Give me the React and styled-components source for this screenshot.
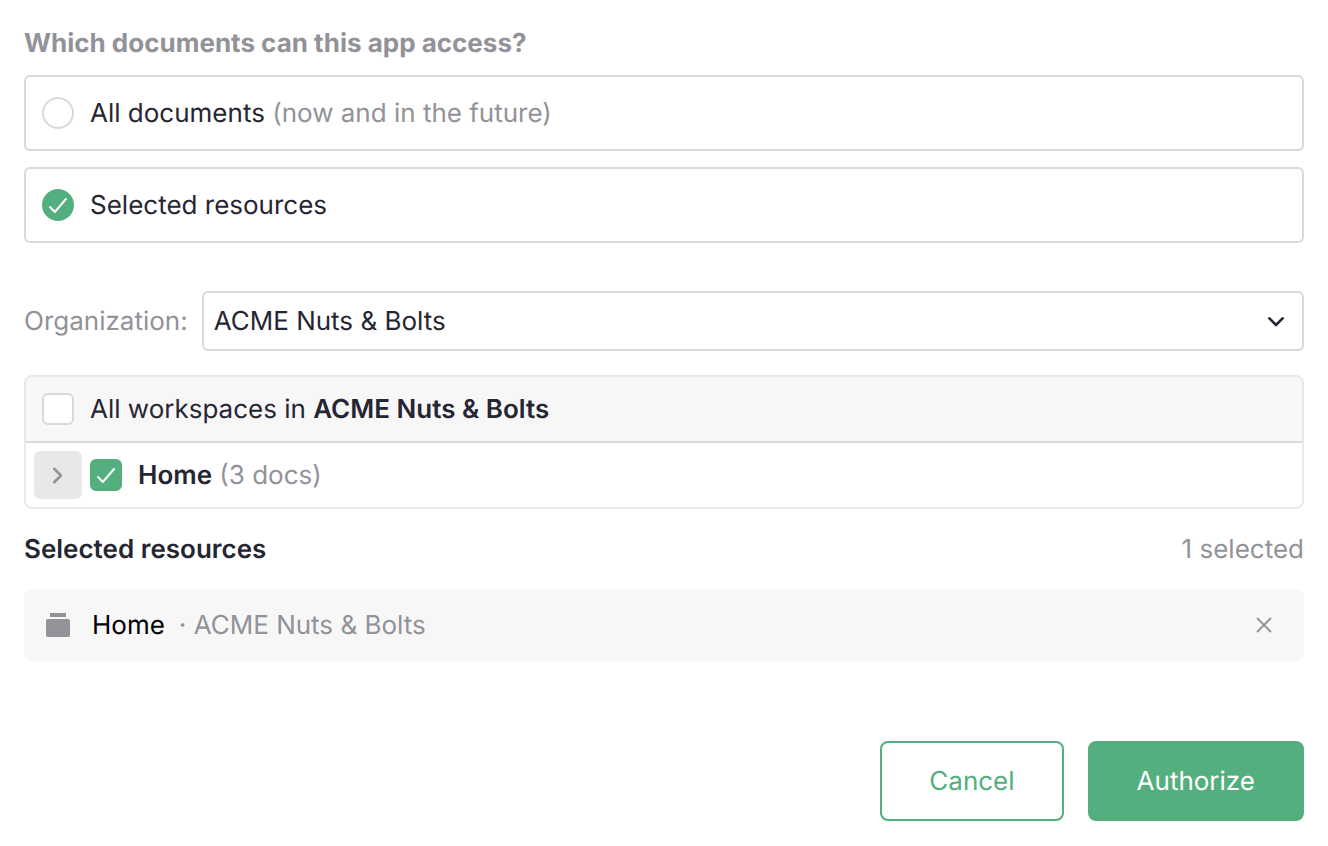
import React, { useState } from "react";
import styled, { createGlobalStyle } from "styled-components";

const color = {
  text: "#262633",
  muted: "#929299",
  border: "#d9d9d9",
  lightBorder: "#e8e8e8",
  surface: "#f7f7f7",
  green: "#53af7e",
};

const GlobalStyle = createGlobalStyle`
  *, *::before, *::after { box-sizing: border-box; }
  body {
    margin: 0;
    background: #fff;
    color: ${color.text};
    font-family: Inter, "Liberation Sans", sans-serif;
    font-size: 26px;
    line-height: 40px;
    text-rendering: geometricPrecision;
  }
  button, select { font: inherit; text-rendering: inherit; }
`;

const Form = styled.form`
  display: flex;
  flex-direction: column;
  padding: 24px;
`;

const OptionGroup = styled.fieldset`
  display: flex;
  flex-direction: column;
  gap: 16px;
  min-width: 0;
  margin: 0 0 48px;
  padding: 0;
  border: 0;
`;

const GroupTitle = styled.legend`
  margin-bottom: 11px;
  padding: 0;
  color: ${color.muted};
  font-weight: 700;
`;

const Option = styled.label`
  display: flex;
  align-items: center;
  gap: 16px;
  min-height: 76px;
  padding: 0 16px;
  border: 2px solid ${color.border};
  border-radius: 6px;
`;

const Caption = styled.span`
  padding-top: 2px;
`;

const Muted = styled.span`
  color: ${color.muted};
`;

const Strong = styled.strong`
  font-weight: 600;
`;

const Mark = styled.span`
  display: grid;
  flex: none;
  width: 32px;
  height: 32px;

  > * { grid-area: 1 / 1; }
  > svg { pointer-events: none; }
`;

const MarkInput = styled.input`
  appearance: none;
  width: 32px;
  height: 32px;
  margin: 0;
  background: #fff;
  border: 2px solid ${color.border};
  border-radius: ${(p) => (p.type === "radio" ? "50%" : "6px")};

  &:checked {
    background: ${color.green};
    border-color: ${color.green};
  }
`;

const OrgRow = styled.div`
  display: flex;
  align-items: center;
  gap: 14px;
  margin-bottom: 24px;
`;

const OrgLabel = styled.label`
  padding-top: 2px;
  color: ${color.muted};
`;

const SelectBox = styled.div`
  display: grid;
  flex: 1;
  align-items: center;

  > * { grid-area: 1 / 1; }
  > svg {
    justify-self: end;
    margin-right: 16px;
    pointer-events: none;
  }
`;

const Select = styled.select`
  appearance: none;
  width: 100%;
  height: 60px;
  padding: 2px 48px 0 10px;
  color: ${color.text};
  background: #fff;
  border: 2px solid ${color.border};
  border-radius: 6px;
`;

const Tree = styled.div`
  border: 2px solid ${color.lightBorder};
  border-radius: 8px;
  overflow: hidden;
`;

const TreeHeader = styled.label`
  display: flex;
  align-items: center;
  gap: 16px;
  height: 66px;
  padding: 0 16px;
  background: ${color.surface};
  border-bottom: 2px solid ${color.border};
`;

const TreeRow = styled.div`
  display: flex;
  align-items: center;
  gap: 8px;
  height: 64px;
  padding: 0 8px;
`;

const TreeLabel = styled.label`
  display: flex;
  align-items: center;
  gap: 16px;
`;

const Expander = styled.button`
  display: grid;
  place-items: center;
  width: 48px;
  height: 48px;
  padding: 0;
  color: ${color.muted};
  background: ${color.lightBorder};
  border: 0;
  border-radius: 6px;
`;

const Summary = styled.div`
  display: flex;
  align-items: center;
  justify-content: space-between;
  height: 80px;
  padding-top: 2px;
`;

const SummaryTitle = styled.h2`
  margin: 0;
  font-size: inherit;
  font-weight: 600;
`;

const Resource = styled.div`
  display: flex;
  align-items: center;
  height: 72px;
  padding: 0 24px 0 20px;
  color: ${color.muted};
  background: ${color.surface};
  border-radius: 8px;
`;

const ResourceName = styled(Caption)`
  margin: 0 14px 0 20px;
  color: #000;
`;

const RemoveButton = styled.button`
  display: grid;
  place-items: center;
  width: 32px;
  height: 32px;
  margin-left: auto;
  padding: 0;
  color: inherit;
  background: none;
  border: 0;
`;

const Actions = styled.div`
  display: flex;
  justify-content: flex-end;
  gap: 24px;
  margin-top: 80px;
`;

const Button = styled.button`
  height: 80px;
  padding: 2px 47px 0;
  color: ${(p) => (p.$primary ? "#fff" : color.green)};
  background: ${(p) => (p.$primary ? color.green : "#fff")};
  border: 2px solid ${color.green};
  border-radius: 8px;
`;

const Stroke = ({ size, width = 2, d }) => (
  <svg
    width={size}
    height={size}
    viewBox={`0 0 ${size} ${size}`}
    fill="none"
    stroke="currentColor"
    strokeWidth={width}
    strokeLinecap="round"
    strokeLinejoin="round"
    aria-hidden="true"
  >
    <path d={d} />
  </svg>
);

const CheckMark = () => (
  <svg width="32" height="32" viewBox="0 0 32 32" fill="none" stroke="#fff" strokeWidth="2" strokeLinecap="round" strokeLinejoin="round" aria-hidden="true">
    <path d="M8 18L12.8 23L24 10" />
  </svg>
);

const WorkspaceIcon = () => (
  <svg width="28" height="32" viewBox="0 0 28 32" fill="currentColor" aria-hidden="true">
    <rect x="6" y="4" width="16" height="4" />
    <rect x="2" y="10" width="24" height="18" rx="2" />
  </svg>
);

function Toggle({ type, ...rest }) {
  return (
    <Mark>
      <MarkInput type={type} {...rest} />
      {rest.checked && <CheckMark />}
    </Mark>
  );
}

export default function App() {
  const [access, setAccess] = useState("selected");
  const [all, setAll] = useState(false);
  const [home, setHome] = useState(true);

  return (
    <>
      <GlobalStyle />
      <Form onSubmit={(e) => e.preventDefault()}>
        <OptionGroup>
          <GroupTitle>Which documents can this app access?</GroupTitle>
          <Option>
            <Toggle type="radio" name="access" checked={access === "all"} onChange={() => setAccess("all")} />
            <Caption>
              All documents <Muted>(now and in the future)</Muted>
            </Caption>
          </Option>
          <Option>
            <Toggle type="radio" name="access" checked={access === "selected"} onChange={() => setAccess("selected")} />
            <Caption>Selected resources</Caption>
          </Option>
        </OptionGroup>

        <OrgRow>
          <OrgLabel htmlFor="organization">Organization:</OrgLabel>
          <SelectBox>
            <Select id="organization">
              <option>ACME Nuts &amp; Bolts</option>
            </Select>
            <Stroke size={24} width={2.6} d="M5.4 9.3L12 16L18.6 9.3" />
          </SelectBox>
        </OrgRow>

        <Tree>
          <TreeHeader>
            <Toggle type="checkbox" checked={all} onChange={() => setAll(!all)} />
            <Caption>
              All workspaces in <Strong>ACME Nuts &amp; Bolts</Strong>
            </Caption>
          </TreeHeader>
          <TreeRow>
            <Expander type="button" aria-label="Expand Home">
              <Stroke size={24} width={2.6} d="M8.2 5.8L15 12.5L8.2 19.2" />
            </Expander>
            <TreeLabel>
              <Toggle type="checkbox" checked={home} onChange={() => setHome(!home)} />
              <Caption>
                <Strong>Home</Strong> <Muted>(3 docs)</Muted>
              </Caption>
            </TreeLabel>
          </TreeRow>
        </Tree>

        <Summary>
          <SummaryTitle>Selected resources</SummaryTitle>
          <Muted>1 selected</Muted>
        </Summary>

        <Resource>
          <WorkspaceIcon />
          <ResourceName>Home</ResourceName>
          <Caption>· ACME Nuts &amp; Bolts</Caption>
          <RemoveButton type="button" aria-label="Remove Home">
            <Stroke size={24} width={1.8} d="M5.5 5.5L18.5 18.5M18.5 5.5L5.5 18.5" />
          </RemoveButton>
        </Resource>

        <Actions>
          <Button type="button">Cancel</Button>
          <Button type="submit" $primary>
            Authorize
          </Button>
        </Actions>
      </Form>
    </>
  );
}
